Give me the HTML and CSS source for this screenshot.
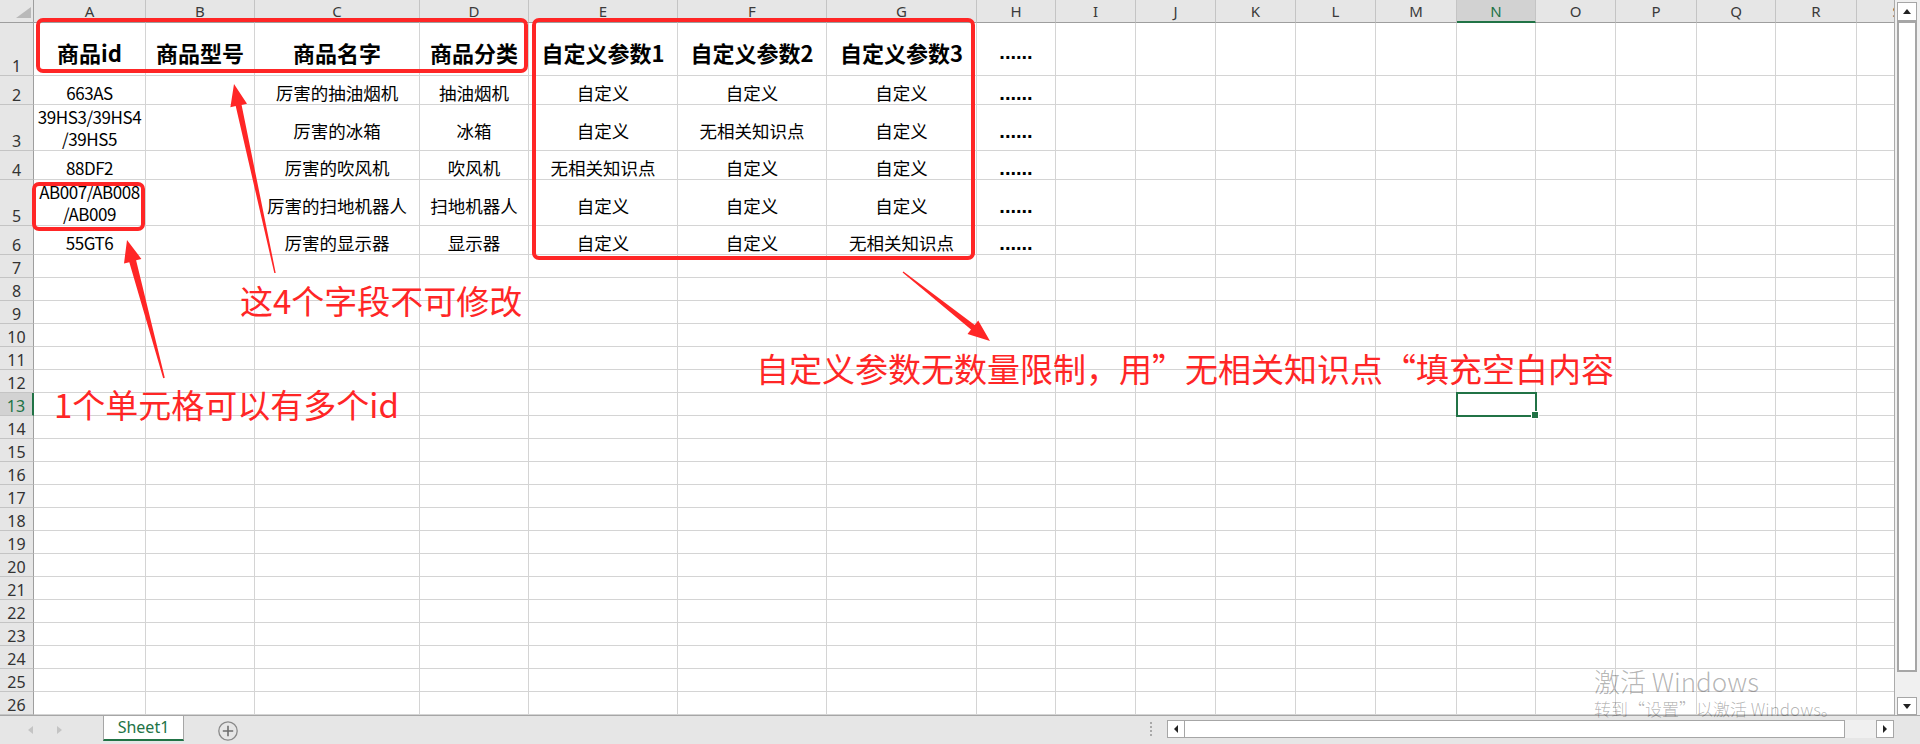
FILE: index.html
```html
<!DOCTYPE html>
<html lang="zh-CN">
<head>
<meta charset="utf-8">
<title>Sheet1</title>
<link rel="stylesheet" href="styles.css">
</head>
<body>
<div class="app">
  <div class="main">
    <div class="sheetwrap">
      <div class="sheet">
        <div class="corner"><span class="tri"></span></div>
        <div class="ch">A</div><div class="ch">B</div><div class="ch">C</div><div class="ch">D</div><div class="ch">E</div><div class="ch">F</div><div class="ch">G</div><div class="ch">H</div><div class="ch">I</div><div class="ch">J</div><div class="ch">K</div><div class="ch">L</div><div class="ch">M</div><div class="ch sel">N</div><div class="ch">O</div><div class="ch">P</div><div class="ch">Q</div><div class="ch">R</div><div class="ch">S</div>

        <div class="rh">1</div>
        <div class="c hd">商品id</div><div class="c hd">商品型号</div><div class="c hd">商品名字</div><div class="c hd">商品分类</div><div class="c hd">自定义参数1</div><div class="c hd">自定义参数2</div><div class="c hd">自定义参数3</div><div class="c dots">......</div>
        <div class="c"></div><div class="c"></div><div class="c"></div><div class="c"></div><div class="c"></div><div class="c"></div><div class="c"></div><div class="c"></div><div class="c"></div><div class="c"></div><div class="c"></div>

        <div class="rh">2</div>
        <div class="c id">663AS</div><div class="c"></div><div class="c">厉害的抽油烟机</div><div class="c">抽油烟机</div><div class="c">自定义</div><div class="c">自定义</div><div class="c">自定义</div><div class="c dots">......</div>
        <div class="c"></div><div class="c"></div><div class="c"></div><div class="c"></div><div class="c"></div><div class="c"></div><div class="c"></div><div class="c"></div><div class="c"></div><div class="c"></div><div class="c"></div>

        <div class="rh">3</div>
        <div class="c id two"><span class="t">39HS3/39HS4<br>/39HS5</span></div><div class="c"></div><div class="c">厉害的冰箱</div><div class="c">冰箱</div><div class="c">自定义</div><div class="c">无相关知识点</div><div class="c">自定义</div><div class="c dots">......</div>
        <div class="c"></div><div class="c"></div><div class="c"></div><div class="c"></div><div class="c"></div><div class="c"></div><div class="c"></div><div class="c"></div><div class="c"></div><div class="c"></div><div class="c"></div>

        <div class="rh">4</div>
        <div class="c id">88DF2</div><div class="c"></div><div class="c">厉害的吹风机</div><div class="c">吹风机</div><div class="c">无相关知识点</div><div class="c">自定义</div><div class="c">自定义</div><div class="c dots">......</div>
        <div class="c"></div><div class="c"></div><div class="c"></div><div class="c"></div><div class="c"></div><div class="c"></div><div class="c"></div><div class="c"></div><div class="c"></div><div class="c"></div><div class="c"></div>

        <div class="rh">5</div>
        <div class="c id two"><span class="t">AB007/AB008<br>/AB009</span></div><div class="c"></div><div class="c">厉害的扫地机器人</div><div class="c">扫地机器人</div><div class="c">自定义</div><div class="c">自定义</div><div class="c">自定义</div><div class="c dots">......</div>
        <div class="c"></div><div class="c"></div><div class="c"></div><div class="c"></div><div class="c"></div><div class="c"></div><div class="c"></div><div class="c"></div><div class="c"></div><div class="c"></div><div class="c"></div>

        <div class="rh">6</div>
        <div class="c id">55GT6</div><div class="c"></div><div class="c">厉害的显示器</div><div class="c">显示器</div><div class="c">自定义</div><div class="c">自定义</div><div class="c">无相关知识点</div><div class="c dots">......</div>
        <div class="c"></div><div class="c"></div><div class="c"></div><div class="c"></div><div class="c"></div><div class="c"></div><div class="c"></div><div class="c"></div><div class="c"></div><div class="c"></div><div class="c"></div>

        <div class="rh">7</div>
        <div class="c"></div><div class="c"></div><div class="c"></div><div class="c"></div><div class="c"></div><div class="c"></div><div class="c"></div><div class="c"></div><div class="c"></div><div class="c"></div><div class="c"></div><div class="c"></div><div class="c"></div><div class="c"></div><div class="c"></div><div class="c"></div><div class="c"></div><div class="c"></div><div class="c"></div>
        <div class="rh">8</div>
        <div class="c"></div><div class="c"></div><div class="c"></div><div class="c"></div><div class="c"></div><div class="c"></div><div class="c"></div><div class="c"></div><div class="c"></div><div class="c"></div><div class="c"></div><div class="c"></div><div class="c"></div><div class="c"></div><div class="c"></div><div class="c"></div><div class="c"></div><div class="c"></div><div class="c"></div>
        <div class="rh">9</div>
        <div class="c"></div><div class="c"></div><div class="c"></div><div class="c"></div><div class="c"></div><div class="c"></div><div class="c"></div><div class="c"></div><div class="c"></div><div class="c"></div><div class="c"></div><div class="c"></div><div class="c"></div><div class="c"></div><div class="c"></div><div class="c"></div><div class="c"></div><div class="c"></div><div class="c"></div>
        <div class="rh">10</div>
        <div class="c"></div><div class="c"></div><div class="c"></div><div class="c"></div><div class="c"></div><div class="c"></div><div class="c"></div><div class="c"></div><div class="c"></div><div class="c"></div><div class="c"></div><div class="c"></div><div class="c"></div><div class="c"></div><div class="c"></div><div class="c"></div><div class="c"></div><div class="c"></div><div class="c"></div>
        <div class="rh">11</div>
        <div class="c"></div><div class="c"></div><div class="c"></div><div class="c"></div><div class="c"></div><div class="c"></div><div class="c"></div><div class="c"></div><div class="c"></div><div class="c"></div><div class="c"></div><div class="c"></div><div class="c"></div><div class="c"></div><div class="c"></div><div class="c"></div><div class="c"></div><div class="c"></div><div class="c"></div>
        <div class="rh">12</div>
        <div class="c"></div><div class="c"></div><div class="c"></div><div class="c"></div><div class="c"></div><div class="c"></div><div class="c"></div><div class="c"></div><div class="c"></div><div class="c"></div><div class="c"></div><div class="c"></div><div class="c"></div><div class="c"></div><div class="c"></div><div class="c"></div><div class="c"></div><div class="c"></div><div class="c"></div>
        <div class="rh sel">13</div>
        <div class="c"></div><div class="c"></div><div class="c"></div><div class="c"></div><div class="c"></div><div class="c"></div><div class="c"></div><div class="c"></div><div class="c"></div><div class="c"></div><div class="c"></div><div class="c"></div><div class="c"></div><div class="c active"></div><div class="c"></div><div class="c"></div><div class="c"></div><div class="c"></div><div class="c"></div>
        <div class="rh">14</div>
        <div class="c"></div><div class="c"></div><div class="c"></div><div class="c"></div><div class="c"></div><div class="c"></div><div class="c"></div><div class="c"></div><div class="c"></div><div class="c"></div><div class="c"></div><div class="c"></div><div class="c"></div><div class="c"></div><div class="c"></div><div class="c"></div><div class="c"></div><div class="c"></div><div class="c"></div>
        <div class="rh">15</div>
        <div class="c"></div><div class="c"></div><div class="c"></div><div class="c"></div><div class="c"></div><div class="c"></div><div class="c"></div><div class="c"></div><div class="c"></div><div class="c"></div><div class="c"></div><div class="c"></div><div class="c"></div><div class="c"></div><div class="c"></div><div class="c"></div><div class="c"></div><div class="c"></div><div class="c"></div>
        <div class="rh">16</div>
        <div class="c"></div><div class="c"></div><div class="c"></div><div class="c"></div><div class="c"></div><div class="c"></div><div class="c"></div><div class="c"></div><div class="c"></div><div class="c"></div><div class="c"></div><div class="c"></div><div class="c"></div><div class="c"></div><div class="c"></div><div class="c"></div><div class="c"></div><div class="c"></div><div class="c"></div>
        <div class="rh">17</div>
        <div class="c"></div><div class="c"></div><div class="c"></div><div class="c"></div><div class="c"></div><div class="c"></div><div class="c"></div><div class="c"></div><div class="c"></div><div class="c"></div><div class="c"></div><div class="c"></div><div class="c"></div><div class="c"></div><div class="c"></div><div class="c"></div><div class="c"></div><div class="c"></div><div class="c"></div>
        <div class="rh">18</div>
        <div class="c"></div><div class="c"></div><div class="c"></div><div class="c"></div><div class="c"></div><div class="c"></div><div class="c"></div><div class="c"></div><div class="c"></div><div class="c"></div><div class="c"></div><div class="c"></div><div class="c"></div><div class="c"></div><div class="c"></div><div class="c"></div><div class="c"></div><div class="c"></div><div class="c"></div>
        <div class="rh">19</div>
        <div class="c"></div><div class="c"></div><div class="c"></div><div class="c"></div><div class="c"></div><div class="c"></div><div class="c"></div><div class="c"></div><div class="c"></div><div class="c"></div><div class="c"></div><div class="c"></div><div class="c"></div><div class="c"></div><div class="c"></div><div class="c"></div><div class="c"></div><div class="c"></div><div class="c"></div>
        <div class="rh">20</div>
        <div class="c"></div><div class="c"></div><div class="c"></div><div class="c"></div><div class="c"></div><div class="c"></div><div class="c"></div><div class="c"></div><div class="c"></div><div class="c"></div><div class="c"></div><div class="c"></div><div class="c"></div><div class="c"></div><div class="c"></div><div class="c"></div><div class="c"></div><div class="c"></div><div class="c"></div>
        <div class="rh">21</div>
        <div class="c"></div><div class="c"></div><div class="c"></div><div class="c"></div><div class="c"></div><div class="c"></div><div class="c"></div><div class="c"></div><div class="c"></div><div class="c"></div><div class="c"></div><div class="c"></div><div class="c"></div><div class="c"></div><div class="c"></div><div class="c"></div><div class="c"></div><div class="c"></div><div class="c"></div>
        <div class="rh">22</div>
        <div class="c"></div><div class="c"></div><div class="c"></div><div class="c"></div><div class="c"></div><div class="c"></div><div class="c"></div><div class="c"></div><div class="c"></div><div class="c"></div><div class="c"></div><div class="c"></div><div class="c"></div><div class="c"></div><div class="c"></div><div class="c"></div><div class="c"></div><div class="c"></div><div class="c"></div>
        <div class="rh">23</div>
        <div class="c"></div><div class="c"></div><div class="c"></div><div class="c"></div><div class="c"></div><div class="c"></div><div class="c"></div><div class="c"></div><div class="c"></div><div class="c"></div><div class="c"></div><div class="c"></div><div class="c"></div><div class="c"></div><div class="c"></div><div class="c"></div><div class="c"></div><div class="c"></div><div class="c"></div>
        <div class="rh">24</div>
        <div class="c"></div><div class="c"></div><div class="c"></div><div class="c"></div><div class="c"></div><div class="c"></div><div class="c"></div><div class="c"></div><div class="c"></div><div class="c"></div><div class="c"></div><div class="c"></div><div class="c"></div><div class="c"></div><div class="c"></div><div class="c"></div><div class="c"></div><div class="c"></div><div class="c"></div>
        <div class="rh">25</div>
        <div class="c"></div><div class="c"></div><div class="c"></div><div class="c"></div><div class="c"></div><div class="c"></div><div class="c"></div><div class="c"></div><div class="c"></div><div class="c"></div><div class="c"></div><div class="c"></div><div class="c"></div><div class="c"></div><div class="c"></div><div class="c"></div><div class="c"></div><div class="c"></div><div class="c"></div>
        <div class="rh">26</div>
        <div class="c"></div><div class="c"></div><div class="c"></div><div class="c"></div><div class="c"></div><div class="c"></div><div class="c"></div><div class="c"></div><div class="c"></div><div class="c"></div><div class="c"></div><div class="c"></div><div class="c"></div><div class="c"></div><div class="c"></div><div class="c"></div><div class="c"></div><div class="c"></div><div class="c"></div>
      </div>
    </div>
    <div class="vscroll">
      <div class="vbtn up"><span class="tri-up"></span></div>
      <div class="vthumb"></div>
      <div class="vtrack"></div>
      <div class="vbtn down"><span class="tri-down"></span></div>
    </div>
  </div>

  <div class="bottom">
    <div class="nav"><span class="nl"></span><span class="nr"></span></div>
    <div class="tab">Sheet1</div>
    <div class="add">
      <svg width="20" height="20" viewBox="0 0 20 20"><circle cx="10" cy="10" r="9.2" fill="none" stroke="#8a8a8a" stroke-width="1.3"/><path d="M10 4.8v10.4M4.8 10h10.4" stroke="#6e6e6e" stroke-width="1.6"/></svg>
    </div>
    <div class="spacer"></div>
    <div class="split"></div>
    <div class="hscroll">
      <div class="hbtn"><span class="tri-left"></span></div>
      <div class="hthumb"></div>
      <div class="htrack"></div>
      <div class="hbtn"><span class="tri-right"></span></div>
    </div>
    <div class="bcorner"></div>
  </div>

  <div class="box box1"></div>
  <div class="box box2"></div>
  <div class="box box3"></div>

  <svg class="arrows" width="1920" height="744" viewBox="0 0 1920 744">
    <polygon points="275.7,272.9 241.6,104.9 247.0,103.7 234,84 230.4,107.3 235.7,106.1 274.3,273.1"/>
    <polygon points="164.8,377.8 136.1,260.3 141.4,258.9 127,240 124.0,263.6 129.3,262.2 163.2,378.2"/>
    <polygon points="902.6,272.6 971.0,329.6 967.5,333.9 990,341 978.2,320.6 974.7,324.9 903.4,271.5"/>
  </svg>

  <div class="note note1">这4个字段不可修改</div>
  <div class="note note2">1个单元格可以有多个id</div>
  <div class="note note3">自定义参数无数量限制，用”无相关知识点“填充空白内容</div>

  <div class="wm wm1">激活 Windows</div>
  <div class="wm wm2">转到“设置”以激活 Windows。</div>
</div>
</body>
</html>
```

FILE: styles.css
```css
* {
  box-sizing: border-box;
  margin: 0;
  padding: 0;
}

html,
body {
  width: 1920px;
  height: 744px;
  overflow: hidden;
  background: #fff;
}

body {
  font-family: "Noto Sans CJK SC", "Noto Sans", sans-serif;
  color: #000;
}

.app {
  position: relative;
  width: 1920px;
  height: 744px;
  display: flex;
  flex-direction: column;
  overflow: hidden;
}

.main {
  display: flex;
  height: 715px;
}

.sheetwrap {
  width: 1895px;
  height: 715px;
  overflow: hidden;
  border-right: 1px solid #ababab;
}

.sheet {
  display: grid;
  width: 1937px;
  grid-template-columns: 34px 112px 109px 165px 109px 149px 149px 150px 79px 80px 80px 80px 80px 81px 79px 80px 81px 79px 81px 80px;
  grid-template-rows: 23px 53px 29px 46px 29px 46px 29px repeat(20, 23px);
}

/* top-left corner */
.corner {
  background: #e6e6e6;
  border-right: 1px solid #9e9e9e;
  border-bottom: 1px solid #9e9e9e;
  display: flex;
  justify-content: flex-end;
  align-items: flex-end;
  padding: 0 2px 4px 0;
}

.tri {
  width: 0;
  height: 0;
  border-left: 15px solid transparent;
  border-bottom: 11px solid #b9b9b9;
}

/* column headers */
.ch {
  background: #e6e6e6;
  border-right: 1px solid #c4c4c4;
  border-bottom: 1px solid #9e9e9e;
  font-family: "Noto Sans", sans-serif;
  font-size: 15px;
  line-height: 22px;
  color: #3a3a3a;
  text-align: center;
  white-space: nowrap;
}

.ch.sel {
  background: #d2d2d2;
  color: #217346;
  border-bottom: 2px solid #217346;
}

/* row headers */
.rh {
  background: #e6e6e6;
  border-right: 1px solid #9e9e9e;
  border-bottom: 1px solid #c4c4c4;
  font-family: "Noto Sans", sans-serif;
  font-size: 16px;
  line-height: 16px;
  color: #333;
  display: flex;
  align-items: flex-end;
  justify-content: center;
  padding-bottom: 1px;
}

.rh.sel {
  background: #d2d2d2;
  color: #217346;
  border-right: 2px solid #217346;
}

/* cells */
.c {
  border-right: 1px solid #d4d4d4;
  border-bottom: 1px solid #d4d4d4;
  display: flex;
  align-items: center;
  justify-content: center;
  padding-top: 5px;
  font-size: 17.5px;
  line-height: 23px;
  white-space: nowrap;
  overflow: hidden;
  text-align: center;
}

.c.id {
  font-size: 17px;
  letter-spacing: -0.45px;
}

.c.two {
  padding-top: 1px;
  line-height: 22px;
}

.t {
  display: block;
  text-align: center;
}

.c.hd {
  font-size: 22px;
  font-weight: 700;
  line-height: 28px;
}

.c.dots {
  font-family: "Liberation Sans", sans-serif;
  font-size: 20px;
  font-weight: 700;
  line-height: 20px;
  padding-top: 6px;
}

.c.active {
  position: relative;
  z-index: 2;
  outline: 2px solid #217346;
  outline-offset: -1px;
  overflow: visible;
}

.c.active::after {
  content: "";
  position: absolute;
  right: -4px;
  bottom: -4px;
  width: 6px;
  height: 6px;
  background: #217346;
  border: 1px solid #fff;
}

/* vertical scrollbar */
.vscroll {
  width: 25px;
  height: 715px;
  background: #f0f0f0;
  display: flex;
  flex-direction: column;
  padding: 2px 3px 0 2px;
}

.vbtn {
  background: #fff;
  border: 1px solid #a6a6a6;
  display: flex;
  align-items: center;
  justify-content: center;
}

.vbtn.up {
  height: 19px;
}

.vbtn.down {
  height: 18px;
}

.vthumb {
  flex: 1;
  background: #fff;
  border: 2px solid #a6a6a6;
}

.vtrack {
  height: 25px;
}

.tri-up {
  width: 0;
  height: 0;
  border-left: 4px solid transparent;
  border-right: 4px solid transparent;
  border-bottom: 5px solid #222;
}

.tri-down {
  width: 0;
  height: 0;
  border-left: 4px solid transparent;
  border-right: 4px solid transparent;
  border-top: 5px solid #222;
}

/* bottom bar */
.bottom {
  height: 29px;
  background: #e6e6e6;
  border-top: 1px solid #a6a6a6;
  display: flex;
  align-items: flex-start;
}

.nav {
  width: 103px;
  height: 28px;
  display: flex;
  align-items: center;
  padding-left: 28px;
  gap: 24px;
}

.nl {
  width: 0;
  height: 0;
  border-top: 4px solid transparent;
  border-bottom: 4px solid transparent;
  border-right: 5px solid #c4c4c4;
}

.nr {
  width: 0;
  height: 0;
  border-top: 4px solid transparent;
  border-bottom: 4px solid transparent;
  border-left: 5px solid #c4c4c4;
}

.tab {
  width: 81px;
  height: 25px;
  background: #fff;
  border-left: 1px solid #a6a6a6;
  border-right: 1px solid #a6a6a6;
  border-bottom: 2px solid #217346;
  color: #217346;
  font-family: "Noto Sans", sans-serif;
  font-size: 16px;
  display: flex;
  align-items: center;
  justify-content: center;
  padding-bottom: 2px;
}

.add {
  width: 20px;
  height: 20px;
  margin-left: 34px;
  margin-top: 5px;
  display: flex;
}

.spacer {
  flex: 1;
}

.split {
  width: 2px;
  height: 14px;
  margin-top: 6px;
  margin-right: 15px;
  border-left: 2px dotted #a8a8a8;
}

.hscroll {
  width: 727px;
  height: 18px;
  margin-top: 4px;
  display: flex;
}

.hbtn {
  width: 18px;
  height: 18px;
  background: #fff;
  border: 1px solid #a6a6a6;
  display: flex;
  align-items: center;
  justify-content: center;
}

.hthumb {
  width: 660px;
  background: #fff;
  border: 1px solid #a6a6a6;
  border-left: none;
}

.htrack {
  flex: 1;
  background: #f0f0f0;
}

.tri-left {
  width: 0;
  height: 0;
  border-top: 4px solid transparent;
  border-bottom: 4px solid transparent;
  border-right: 4px solid #222;
}

.tri-right {
  width: 0;
  height: 0;
  border-top: 4px solid transparent;
  border-bottom: 4px solid transparent;
  border-left: 4px solid #222;
}

.bcorner {
  width: 26px;
}

/* annotations (overlay) */
.box {
  position: absolute;
  border: 4px solid #ff2626;
  border-radius: 7px;
}

.box1 {
  left: 36px;
  top: 18px;
  width: 492px;
  height: 55px;
}

.box2 {
  left: 532px;
  top: 18px;
  width: 443px;
  height: 242px;
}

.box3 {
  left: 32px;
  top: 182px;
  width: 113px;
  height: 49px;
}

.arrows {
  position: absolute;
  left: 0;
  top: 0;
  pointer-events: none;
}

.arrows polygon {
  fill: #ff2626;
}

.note {
  position: absolute;
  font-family: "Noto Sans CJK SC", sans-serif;
  font-size: 33px;
  line-height: 33px;
  color: #ff2626;
  white-space: nowrap;
}

.note1 {
  left: 240px;
  top: 284px;
}

.note2 {
  left: 54px;
  top: 388px;
}

.note3 {
  left: 756px;
  top: 352px;
}

.wm {
  position: absolute;
  left: 1594px;
  font-family: "Noto Sans CJK SC", sans-serif;
  font-weight: 300;
  color: rgba(0, 0, 0, 0.3);
  white-space: nowrap;
}

.wm1 {
  top: 668px;
  font-size: 26px;
  line-height: 26px;
}

.wm2 {
  top: 699px;
  font-size: 17px;
  line-height: 19px;
}
```
